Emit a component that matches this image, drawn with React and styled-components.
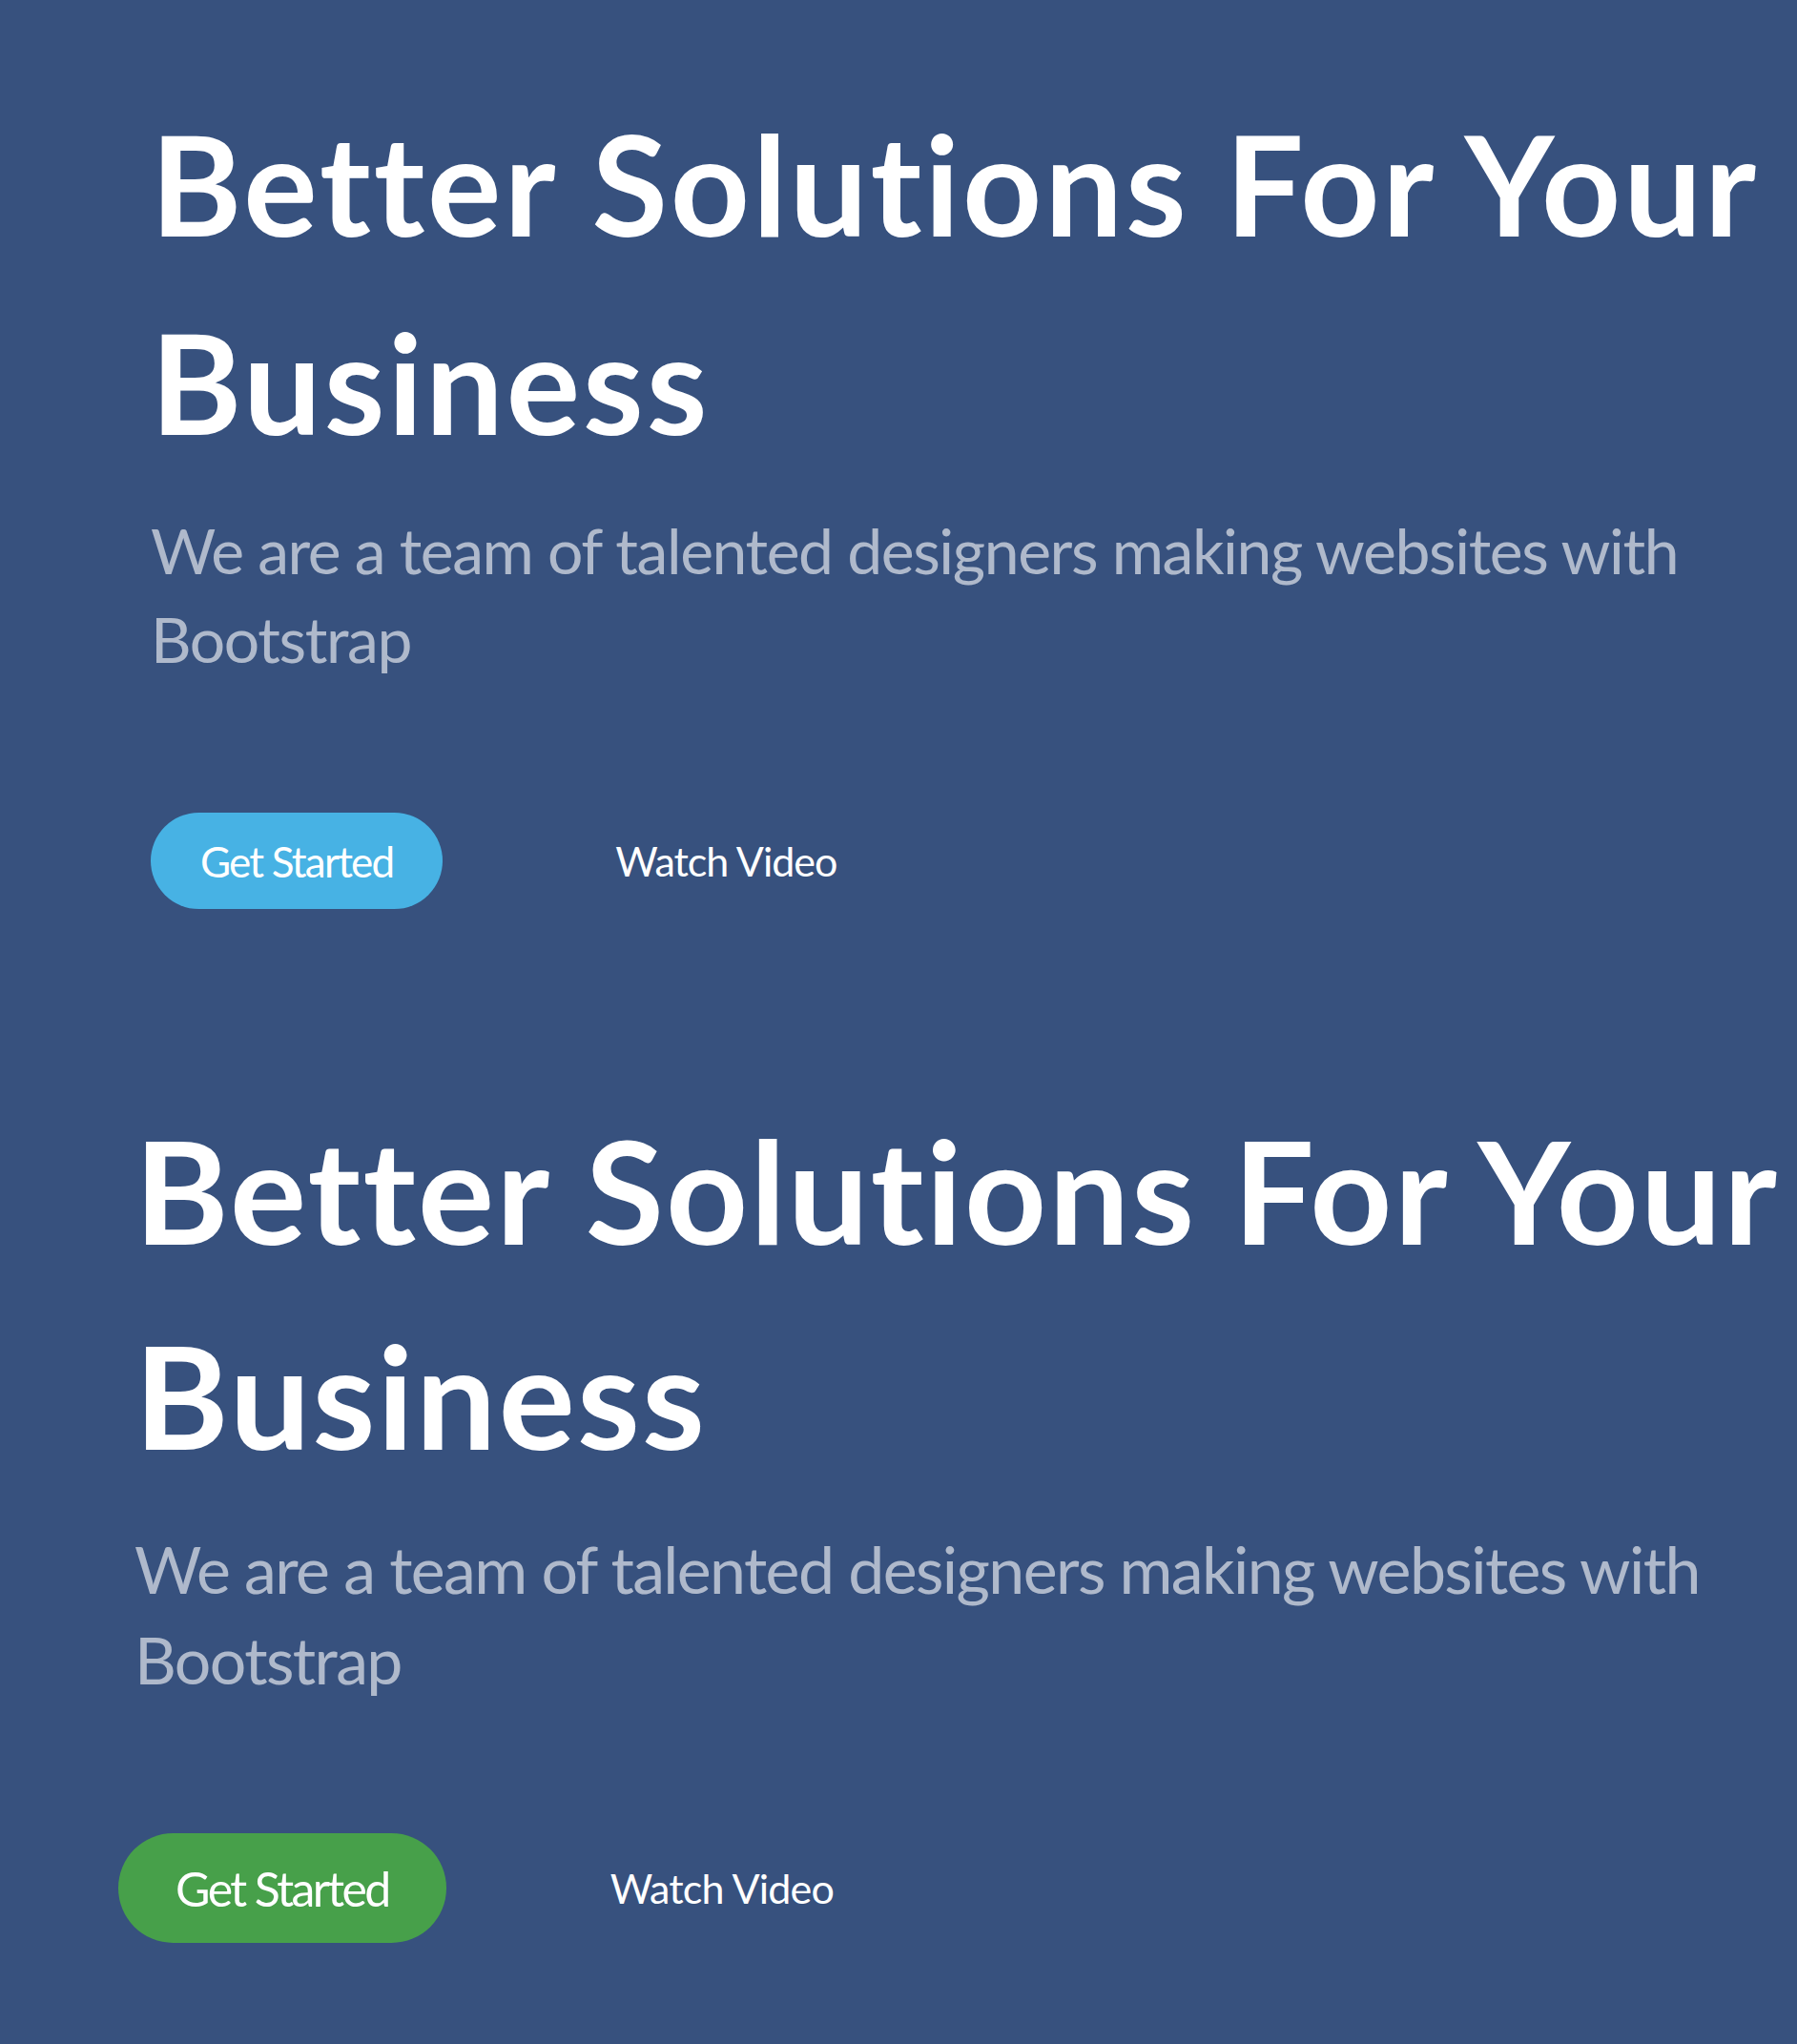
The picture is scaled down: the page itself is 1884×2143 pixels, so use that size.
import React from 'react';
import styled, { createGlobalStyle } from 'styled-components';

const GlobalStyle = createGlobalStyle`
  html, body {
    margin: 0;
    padding: 0;
    background: #37517e;
  }
  body {
    font-family: Lato, "Open Sans", sans-serif;
  }
`;

// two hero blocks, the second one drawn a little larger with a green button
const variants = {
  regular: {
    left: 158,
    top: 88,
    titleSize: 145,
    titleLine: 208,
    titleSpacing: 2.9,
    subSize: 66,
    subLine: 93,
    subSpacing: -1.4,
    subGap: 26,
    actionsGap: 136,
    btnColor: '#47b2e4',
    btnSize: 44,
    btnSpacing: -1.8,
    btnPadX: 52,
    btnHeight: 101,
    btnShift: 0,
    linkGap: 181,
    linkSize: 43,
    linkSpacing: -1,
  },
  large: {
    left: 141,
    top: 187,
    titleSize: 150,
    titleLine: 215,
    titleSpacing: 2.2,
    subSize: 68,
    subLine: 95,
    subSpacing: -1.6,
    subGap: 27,
    actionsGap: 135,
    btnColor: '#47a04a',
    btnSize: 50,
    btnSpacing: -2.6,
    btnPadX: 60,
    btnHeight: 115,
    btnShift: -17,
    linkGap: 172,
    linkSize: 43,
    linkSpacing: -0.8,
  },
};

const Page = styled.div`
  display: flex;
  flex-direction: column;
  min-height: 2143px;
  background: #37517e;
`;

const Hero = styled.section`
  display: flex;
  flex-direction: column;
  align-items: flex-start;
  padding: ${({ v }) => v.top}px 0 0 ${({ v }) => v.left}px;
`;

const Title = styled.h1`
  margin: 0;
  font-family: Lato, sans-serif;
  font-weight: 700;
  color: #fff;
  font-size: ${({ v }) => v.titleSize}px;
  line-height: ${({ v }) => v.titleLine}px;
  letter-spacing: ${({ v }) => v.titleSpacing}px;
`;

const Subtitle = styled.h2`
  margin: ${({ v }) => v.subGap}px 0 0 0;
  font-family: Lato, sans-serif;
  font-weight: 400;
  color: rgba(255, 255, 255, 0.6);
  font-size: ${({ v }) => v.subSize}px;
  line-height: ${({ v }) => v.subLine}px;
  letter-spacing: ${({ v }) => v.subSpacing}px;
`;

const Actions = styled.div`
  display: flex;
  align-items: center;
  gap: ${({ v }) => v.linkGap}px;
  margin: ${({ v }) => v.actionsGap}px 0 0 ${({ v }) => v.btnShift}px;
`;

const GetStarted = styled.a`
  display: inline-flex;
  align-items: center;
  height: ${({ v }) => v.btnHeight}px;
  padding: 0 ${({ v }) => v.btnPadX}px;
  border-radius: 150px;
  background: ${({ v }) => v.btnColor};
  color: #fff;
  font-family: Lato, sans-serif;
  font-weight: 400;
  font-size: ${({ v }) => v.btnSize}px;
  letter-spacing: ${({ v }) => v.btnSpacing}px;
  text-decoration: none;
`;

const WatchVideo = styled.a`
  color: #fff;
  font-family: Lato, sans-serif;
  font-weight: 400;
  font-size: ${({ v }) => v.linkSize}px;
  letter-spacing: ${({ v }) => v.linkSpacing}px;
  text-decoration: none;
`;

const HeroBlock = ({ variant }) => {
  const v = variants[variant];
  return (
    <Hero v={v}>
      <Title v={v}>
        Better Solutions For Your
        <br />
        Business
      </Title>
      <Subtitle v={v}>
        We are a team of talented designers making websites with
        <br />
        Bootstrap
      </Subtitle>
      <Actions v={v}>
        <GetStarted v={v} href="#about">Get Started</GetStarted>
        <WatchVideo v={v} href="#video">Watch Video</WatchVideo>
      </Actions>
    </Hero>
  );
};

export default function App() {
  return (
    <Page>
      <GlobalStyle />
      <HeroBlock variant="regular" />
      <HeroBlock variant="large" />
    </Page>
  );
}
